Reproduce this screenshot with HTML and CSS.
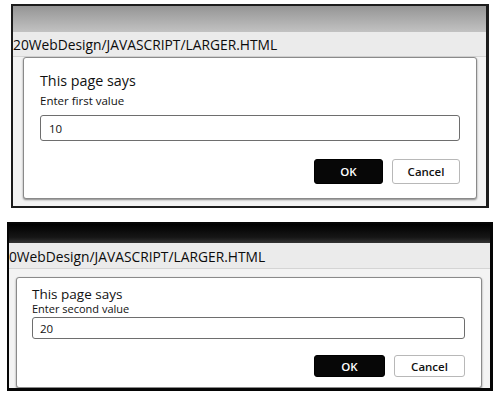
FILE: index.html
```html
<!DOCTYPE html>
<html lang="en">
<head>
    <meta charset="UTF-8">
    <meta name="viewport" content="width=device-width, initial-scale=1.0">
    <title>Larger</title>
    <link rel="stylesheet" href="styles.css">
</head>
<body>

    <!-- Erster Prompt -->
    <div class="shot shot-one">
        <div class="titlebar"></div>
        <div class="urlbar">20WebDesign/JAVASCRIPT/LARGER.HTML</div>
        <div class="stage">
            <div class="dialog">
                <h1>This page says</h1>
                <p>Enter first value</p>
                <input type="text" value="10">
                <div class="actions">
                    <button class="ok">OK</button>
                    <button class="cancel">Cancel</button>
                </div>
            </div>
        </div>
    </div>

    <!-- Zweiter Prompt -->
    <div class="shot shot-two">
        <div class="titlebar"></div>
        <div class="urlbar">20WebDesign/JAVASCRIPT/LARGER.HTML</div>
        <div class="stage">
            <div class="dialog">
                <h1>This page says</h1>
                <p>Enter second value</p>
                <input type="text" value="20">
                <div class="actions">
                    <button class="ok">OK</button>
                    <button class="cancel">Cancel</button>
                </div>
            </div>
        </div>
    </div>

</body>
</html>
```

FILE: styles.css
```css
body {
    margin: 0;
    background-color: #fff;
    font-family: "Open Sans", "Noto Sans", sans-serif;
    color: #111;
}
.shot {
    box-sizing: border-box;
    display: flex;
    flex-direction: column;
    overflow: hidden;
    border: 2px solid #1c1c1c;
    border-right-width: 3px;
    background-color: #f3f3f3;
}
.shot-one {
    width: 478px;
    height: 204px;
    margin: 4px 0 0 11px;
}
.shot-two {
    width: 486px;
    height: 169px;
    margin: 14px 0 0 7px;
    border-color: #050505;
    border-bottom-width: 3px;
}
.titlebar {
    flex-shrink: 0;
}
.shot-one .titlebar {
    height: 26px;
    background: linear-gradient(#959595, #c2c2c2);
}
.shot-two .titlebar {
    height: 19px;
    background: linear-gradient(#000, #161616 70%, #333);
}
.urlbar {
    flex-shrink: 0;
    background-color: #ebebeb;
    border-bottom: 1px solid #d4d4d4;
    font-size: 13.8px;
    white-space: nowrap;
    color: #0c0c0c;
}
.shot-one .urlbar {
    height: 24px;
    line-height: 25px;
}
.shot-two .urlbar {
    height: 25px;
    line-height: 28px;
    text-indent: -8px;
}
.stage {
    flex: 1;
    display: flex;
}
.shot-one .stage {
    padding: 0 9px 7px 10px;
}
.shot-two .stage {
    padding: 8px 8px 0 7px;
}
.dialog {
    flex: 1;
    background-color: #fff;
    border: 1px solid #8a8a8a;
    border-radius: 3px;
    box-shadow: 0 1px 2px rgba(0, 0, 0, 0.45);
}
.shot-one .dialog {
    padding: 14px 16px;
}
.shot-two .dialog {
    padding: 9px 16px 10px 15px;
}
.dialog h1 {
    margin: 0;
    font-weight: 400;
    font-size: 14.3px;
    line-height: 18px;
}
.dialog p {
    margin: 4px 0 0;
    font-size: 11.5px;
    line-height: 14px;
}
.shot-two .dialog h1 {
    font-size: 13.5px;
    line-height: 14px;
}
.shot-two .dialog p {
    margin: 2px 0 0;
    font-size: 11px;
    line-height: 11px;
}
input {
    display: block;
    box-sizing: border-box;
    width: 100%;
    margin: 7px 0 0;
    border: 1px solid #6e6e6e;
    border-radius: 3px;
    font-family: inherit;
    font-size: 11.5px;
    color: #111;
    outline: none;
}
.shot-one input {
    height: 26px;
    padding: 0 8px;
}
.shot-two input {
    height: 22px;
    margin-top: 3px;
    padding: 0 7px;
}
.actions {
    display: flex;
    justify-content: flex-end;
    gap: 9px;
    margin-top: 18px;
}
.shot-two .actions {
    margin-top: 16px;
}
button {
    box-sizing: border-box;
    border-radius: 3px;
    font-family: inherit;
    font-size: 11.5px;
    font-weight: 600;
    cursor: pointer;
    padding: 0;
}
.shot-one button {
    height: 25px;
}
.shot-two button {
    height: 22px;
    width: 71px;
}
.ok {
    width: 69px;
    background-color: #070707;
    border: 1px solid #000;
    color: #fff;
}
.cancel {
    width: 68px;
    background-color: #fff;
    border: 1px solid #b8b8b8;
    color: #111;
}
```
